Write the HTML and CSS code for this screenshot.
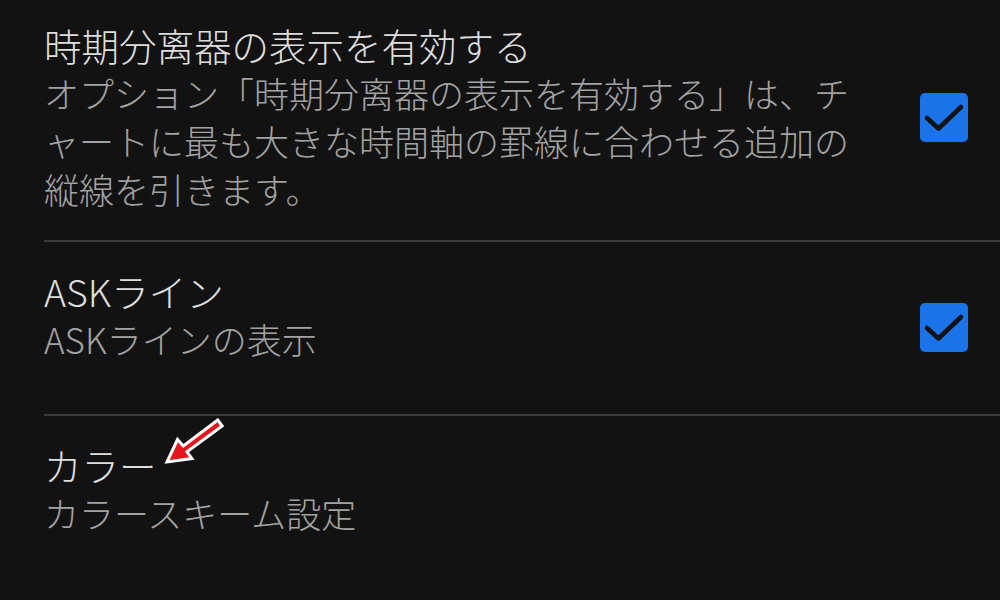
FILE: index.html
```html
<!DOCTYPE html>
<html lang="ja">
<head>
<meta charset="utf-8">
<title>設定</title>
<link rel="stylesheet" href="styles.css">
</head>
<body>
<div class="list">
  <div class="item">
    <div class="text">
      <div class="title">時期分离器の表示を有効する</div>
      <div class="summary">オプション「時期分离器の表示を有効する」は、チ<br>ャートに最も大きな時間軸の罫線に合わせる追加の<br>縦線を引きます。</div>
    </div>
    <div class="check">
      <svg viewBox="0 0 48 49" width="48" height="49"><path d="M7 25 L18.5 35.5 L41 14" fill="none" stroke="#121212" stroke-width="4.5" stroke-linecap="round" stroke-linejoin="round"/></svg>
    </div>
  </div>
  <div class="item">
    <div class="text">
      <div class="title">ASKライン</div>
      <div class="summary">ASKラインの表示</div>
    </div>
    <div class="check">
      <svg viewBox="0 0 48 49" width="48" height="49"><path d="M7 25 L18.5 35.5 L41 14" fill="none" stroke="#121212" stroke-width="4.5" stroke-linecap="round" stroke-linejoin="round"/></svg>
    </div>
  </div>
  <div class="item last">
    <div class="text">
      <div class="title">カラー</div>
      <div class="summary">カラースキーム設定</div>
    </div>
  </div>
</div>
<svg class="annot" viewBox="0 0 1000 600" width="1000" height="600">
  <polygon points="217.8,420 183.3,446 177.5,439.5 167,462 191.9,458.5 187,451.9 222.2,426" fill="#e5161c" stroke="#ffffff" stroke-width="3" stroke-linejoin="miter"/>
</svg>
</body>
</html>
```
FILE: styles.css
```css
html, body {
  margin: 0;
  padding: 0;
  background: #121212;
}
body {
  position: relative;
  width: 1000px;
  height: 600px;
  overflow: hidden;
  font-family: "Noto Sans CJK JP", "Noto Sans", sans-serif;
}
.list {
  margin-top: -4px;
}
.item {
  box-sizing: border-box;
  margin-left: 44px;
  padding: 25px 32px 27px 0;
  min-height: 174px;
  display: flex;
  align-items: center;
  border-bottom: 2px solid #3b3b3b;
}
.item.last {
  border-bottom: none;
}
.text {
  flex: 1;
  align-self: flex-start;
}
.title {
  font-size: 37.5px;
  font-weight: 300;
  line-height: 48px;
  color: #dedede;
  white-space: nowrap;
}
.summary {
  font-size: 35px;
  font-weight: 300;
  line-height: 48px;
  color: #a2a2a2;
  white-space: nowrap;
}
.check {
  width: 48px;
  height: 49px;
  border-radius: 5px;
  background: #1a73e8;
  flex: none;
}
.check svg {
  display: block;
}
.annot {
  position: absolute;
  left: 0;
  top: 0;
  pointer-events: none;
}
```
